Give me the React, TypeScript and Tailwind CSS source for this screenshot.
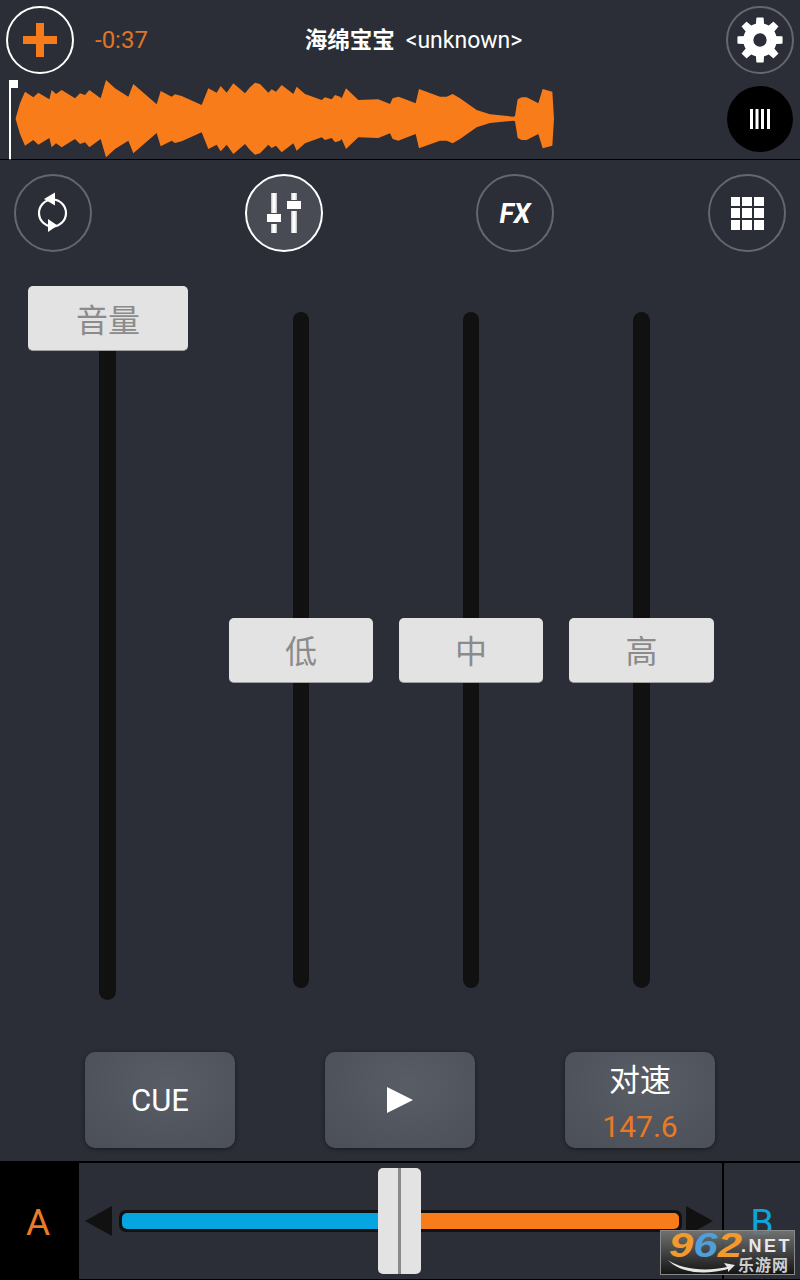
import React from "react";

const topPts: [number, number][] = [
  [47,355],[60,310],[75,275],[100,292],[115,278],[148,298],[155,270],[168,282],[185,270],[225,295],[240,280],[255,285],[268,270],[302,295],[318,240],[345,265],[385,290],[400,252],[470,313],[482,273],[515,290],[525,283],[545,288],[605,315],[625,265],[650,278],[662,258],[680,278],[700,250],[735,280],
  [750,262],[765,248],[780,252],[805,278],[815,268],[828,275],[845,255],[880,282],[890,260],[915,282],[965,300],[975,292],[995,298],[1005,285],[1020,290],[1025,295],[1038,265],[1075,300],[1135,298],[1170,312],[1178,295],[1195,290],[1208,295],[1247,310],[1257,267],[1320,290],[1340,290],[1358,282],[1380,295],[1430,330],[1470,343],[1540,350],[1545,348],[1553,298],[1565,292],[1580,292],[1615,310],[1628,267],[1657,275],[1662,356],
];
const wavePoints = [...topPts, ...[...topPts].reverse().map(([x, y]) => [x, 712 - y] as [number, number])]
  .map(([x, y]) => `${x},${y}`)
  .join(" ");

function gearPath() {
  const cx = 50, cy = 50, teeth = 8;
  const pts: string[] = [];
  for (let i = 0; i < teeth; i++) {
    const a = (i * 2 * Math.PI) / teeth - Math.PI / 2;
    const step = (2 * Math.PI) / teeth;
    const ps: [number, number][] = [
      [a - step * 0.5, 35], [a - step * 0.27, 35], [a - step * 0.17, 48], [a + step * 0.17, 48], [a + step * 0.27, 35],
    ];
    ps.forEach(([t, r]) => pts.push(`${(cx + r * Math.cos(t)).toFixed(2)} ${(cy + r * Math.sin(t)).toFixed(2)}`));
  }
  const hole = `M${cx + 16} ${cy}A16 16 0 1 0 ${cx - 16} ${cy}A16 16 0 1 0 ${cx + 16} ${cy}Z`;
  return `M${pts.join("L")}Z${hole}`;
}

function Round({ active, children }: { active?: boolean; children: React.ReactNode }) {
  return (
    <div className={`w-[78px] h-[78px] shrink-0 rounded-full flex items-center justify-center border-2 ${active ? "border-white bg-[#484b54]" : "border-[#65676e]"}`}>
      {children}
    </div>
  );
}

function Fader({ label, width, height, top, trackMl, trackW, pt }: { label: string; width: string; height: string; top: string; trackMl: string; trackW: string; pt: string }) {
  return (
    <div className={`relative shrink-0 ${width} ${height}`}>
      <div className={`h-full rounded-full bg-[#111111] ${trackW} ${trackMl}`} />
      <div className={`absolute left-0 right-0 ${top} ${pt} h-[65px] rounded-[5px] bg-[#e3e3e3] border-b border-[#a0a0a0] flex items-center justify-center text-[32px] text-[#8b8b8b] leading-none`}>
        {label}
      </div>
    </div>
  );
}

function Transport({ children }: { children: React.ReactNode }) {
  return (
    <div className="w-[150px] h-[96px] rounded-[10px] bg-[radial-gradient(ellipse_at_55%_35%,#585d66,#4a4e57)] shadow-[0_1px_4px_rgba(0,0,0,0.45)] flex flex-col items-center justify-center">
      {children}
    </div>
  );
}

export default function App() {
  return (
    <div
      className="w-[800px] h-[1280px] flex flex-col overflow-hidden bg-[#2b2e36] text-white"
      style={{ fontFamily: 'Roboto, "Noto Sans CJK SC", sans-serif' }}
    >
      {/* Header */}
      <div className="h-[160px] shrink-0 border-b border-black flex flex-col">
        <div className="h-[80px] shrink-0 flex items-start pt-[6px] px-[6px]">
          <div className="w-[68px] h-[68px] shrink-0 rounded-full border-2 border-white flex items-center justify-center">
            <svg width="34" height="34" viewBox="0 0 34 34">
              <path d="M13 0h8v13h13v8H21v13h-8V21H0v-8h13z" fill="#f57c1a" />
            </svg>
          </div>
          <div className="ml-[21px] w-[70px] h-[68px] shrink-0 flex items-center text-[24px] text-[#e0752a]">-0:37</div>
          <div className="flex-1 h-[68px] flex items-center justify-center gap-[11px] pr-[64px]">
            <span className="text-[22.5px] font-bold leading-none">海绵宝宝</span>
            <span className="text-[23px] leading-none">&lt;unknown&gt;</span>
          </div>
          <div className="w-[68px] h-[68px] shrink-0 rounded-full border-2 border-[#65676e] flex items-center justify-center">
            <svg width="46" height="46" viewBox="0 0 100 100">
              <path d={gearPath()} fill="white" fillRule="evenodd" stroke="white" strokeWidth="3" strokeLinejoin="round" />
            </svg>
          </div>
        </div>
        <div className="relative flex-1 flex items-center justify-end pr-[7px]">
          <svg className="absolute left-0 top-[-80px]" width="600" height="160" viewBox="0 0 1800 480">
            <polygon points={wavePoints} fill="#f97c1b" />
            <rect x="27" y="240" width="6" height="238" fill="white" />
            <rect x="30" y="240" width="24" height="24" fill="white" />
          </svg>
          <div className="w-[66px] h-[66px] mt-[-1px] rounded-full bg-black flex items-center justify-center">
            <svg width="20" height="20" viewBox="0 0 20 20">
              <path d="M0 0h3v20H0zM5.5 0h3v20h-3zM11 0h3v20h-3zM17 0h3v20h-3z" fill="white" />
            </svg>
          </div>
        </div>
      </div>

      {/* Mode buttons */}
      <div className="h-[92px] shrink-0 pt-[14px] pl-[14px] flex items-start gap-[153px]">
        <Round>
          <svg width="40" height="44" viewBox="0 0 40 44">
            <circle cx="19.5" cy="22" r="13.5" fill="none" stroke="white" strokeWidth="2.2" />
            <path d="M22 1.5v13L11 8z" fill="white" />
            <path d="M15 28v13l9.5-6.5z" fill="white" />
          </svg>
        </Round>
        <Round active>
          <svg width="34" height="40" viewBox="0 0 34 40">
            <defs>
              <linearGradient id="bar" x1="0" x2="1" y1="0" y2="0">
                <stop offset="0" stopColor="#b8b9bc" />
                <stop offset="0.35" stopColor="#ffffff" />
                <stop offset="0.65" stopColor="#ffffff" />
                <stop offset="1" stopColor="#b8b9bc" />
              </linearGradient>
            </defs>
            <rect x="4" y="0" width="6" height="40" fill="url(#bar)" />
            <rect x="24" y="0" width="6" height="40" fill="url(#bar)" />
            <rect x="0" y="20" width="14" height="11" fill="#484b54" />
            <rect x="0" y="21" width="14" height="8" fill="white" />
            <rect x="20" y="7" width="15" height="11" fill="#484b54" />
            <rect x="20" y="8" width="15" height="8" fill="white" />
          </svg>
        </Round>
        <Round>
          <span className="text-[27px] font-bold italic leading-none mt-[2px]">FX</span>
        </Round>
        <div className="ml-[1px]">
          <Round>
            <div className="grid grid-cols-3 gap-[2px] w-[33px] h-[33px]">
              {Array.from({ length: 9 }).map((_, i) => (
                <div key={i} className="bg-white" />
              ))}
            </div>
          </Round>
        </div>
      </div>

      {/* Faders */}
      <div className="h-[800px] shrink-0 pt-[60px] pl-[28px] flex items-start">
        <Fader label="音量" width="w-[160px]" height="h-[688px]" top="top-[-26px]" pt="pt-[5px]" trackMl="ml-[71px]" trackW="w-[17px]" />
        <div className="w-[41px] shrink-0" />
        <Fader label="低" width="w-[144px]" height="h-[676px]" top="top-[306px]" pt="pt-[4px]" trackMl="ml-[64px]" trackW="w-[16px]" />
        <div className="w-[26px] shrink-0" />
        <Fader label="中" width="w-[144px]" height="h-[676px]" top="top-[306px]" pt="pt-[4px]" trackMl="ml-[64px]" trackW="w-[16px]" />
        <div className="w-[26px] shrink-0" />
        <Fader label="高" width="w-[145px]" height="h-[676px]" top="top-[306px]" pt="pt-[4px]" trackMl="ml-[64px]" trackW="w-[17px]" />
      </div>

      {/* Transport */}
      <div className="h-[109px] shrink-0 pl-[85px] flex items-start gap-[90px]">
        <Transport>
          <span className="text-[31px] leading-none">CUE</span>
        </Transport>
        <Transport>
          <svg width="26" height="26" viewBox="0 0 26 26">
            <path d="M0 0l26 13L0 26z" fill="white" />
          </svg>
        </Transport>
        <Transport>
          <span className="text-[31px] leading-[36px] pt-[7px]">对速</span>
          <span className="text-[30px] leading-[36px] text-[#ea7a22] mt-[10px]">147.6</span>
        </Transport>
      </div>

      {/* Crossfader */}
      <div className="relative flex-1 flex border-t-2 border-b border-black">
        <div className="w-[79px] shrink-0 bg-black flex items-center justify-center text-[37px] text-[#ee7a23] leading-none pr-[3px] pt-[2px]">A</div>
        <div className="relative w-[645px] shrink-0 flex items-center border-r-2 border-black pl-[6px]">
          <svg width="27" height="30" viewBox="0 0 27 30" className="shrink-0">
            <path d="M27 0v30L0 15z" fill="#111111" />
          </svg>
          <div className="ml-[7px] w-[563px] h-[22px] shrink-0 rounded-[7px] bg-[#111111] p-[3px] flex">
            <div className="w-[258px] rounded-l-[5px] bg-[#06a5e0]" />
            <div className="flex-1 rounded-r-[5px] bg-[#f97c1b]" />
          </div>
          <svg width="27" height="30" viewBox="0 0 27 30" className="shrink-0 ml-[4px]">
            <path d="M0 0v30l27-15z" fill="#111111" />
          </svg>
          <div className="absolute left-[299px] top-[5px] w-[43px] h-[106px] rounded-[5px] bg-[#e3e3e3] flex justify-center">
            <div className="w-[3px] h-full bg-[#8a8a8a]" />
          </div>
        </div>
        <div className="flex-1 flex items-center justify-center text-[37px] text-[#0ea5df] leading-none pt-[2px]">B</div>

        {/* Watermark */}
        <div className="absolute left-[660px] top-[67px] w-[135px] h-[45px] border border-[#8a8a8a] bg-[linear-gradient(180deg,rgba(118,118,118,0.92),rgba(20,20,20,0.95))]">
          <div className="flex items-start h-[27px] pl-[8px] leading-none" style={{ fontFamily: '"Liberation Sans", sans-serif' }}>
            <div className="w-[72px] shrink-0 origin-left scale-x-125 flex text-[35px] font-bold italic leading-[28px]">
              <span className="text-[#f29a2e]">9</span>
              <span className="text-[#4f9fdc]">6</span>
              <span className="text-[#f29a2e]">2</span>
            </div>
            <span className="text-[18px] font-bold leading-[18px] mt-[6px] tracking-[2.5px] text-[#e8e8e8]">.NET</span>
          </div>
          <div className="flex items-center pl-[6px] h-[16px]">
            <svg width="70" height="14" viewBox="0 0 70 14" className="shrink-0">
              <path d="M1 1C14 10 38 13 60 8l-3-4 11 2-7 7v-3C40 16 14 15 1 1z" fill="#e6e6e6" />
            </svg>
            <span className="text-[16px] font-bold leading-none text-[#cfcfcf] tracking-[1px] ml-[1px]">乐游网</span>
          </div>
        </div>
      </div>
    </div>
  );
}
